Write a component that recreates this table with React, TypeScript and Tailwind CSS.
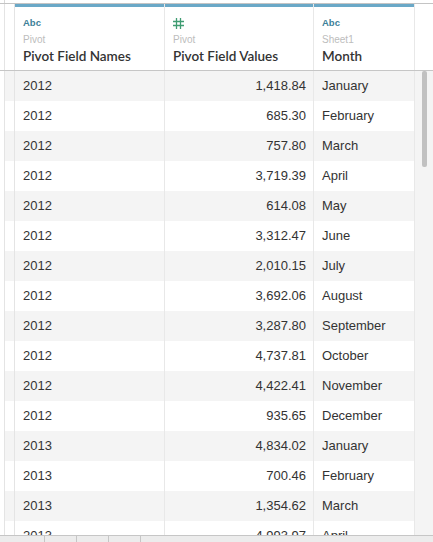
import React from "react";

const rows: [string, string, string][] = [
  ["2012", "1,418.84", "January"],
  ["2012", "685.30", "February"],
  ["2012", "757.80", "March"],
  ["2012", "3,719.39", "April"],
  ["2012", "614.08", "May"],
  ["2012", "3,312.47", "June"],
  ["2012", "2,010.15", "July"],
  ["2012", "3,692.06", "August"],
  ["2012", "3,287.80", "September"],
  ["2012", "4,737.81", "October"],
  ["2012", "4,422.41", "November"],
  ["2012", "935.65", "December"],
  ["2013", "4,834.02", "January"],
  ["2013", "700.46", "February"],
  ["2013", "1,354.62", "March"],
  ["2013", "4,993.97", "April"],
];

function HashIcon() {
  return (
    <svg width="11" height="11" viewBox="0 0 11 11">
      <path
        d="M3.5 0V11M7.5 0V11M0 3.5H11M0 7.5H11"
        stroke="#3f9c72"
        strokeWidth="1.3"
        fill="none"
      />
    </svg>
  );
}

function HeaderCell({
  type,
  source,
  name,
  width,
}: {
  type: "abc" | "num";
  source: string;
  name: string;
  width: string;
}) {
  return (
    <div className={`${width} border-r border-[#e8e8e8] flex flex-col`}>
      <div className="h-[3px] bg-[#6aa8c7]" />
      <div className="px-2 pt-[10px] flex flex-col">
        <div className="h-[12px] flex items-center">
          {type === "abc" ? (
            <span className="text-[9.5px] font-bold text-[#3d7f99] leading-[12px]">Abc</span>
          ) : (
            <HashIcon />
          )}
        </div>
        <div className="mt-[5px] text-[10px] leading-[12px] text-[#bdbdbd]">{source}</div>
        <div
          className="mt-[2px] text-[13.5px] leading-[16px] font-semibold text-[#333333]"
          style={{ fontFamily: "Lato, sans-serif" }}
        >
          {name}
        </div>
      </div>
    </div>
  );
}

export default function App() {
  return (
    <div
      className="w-[433px] h-[542px] bg-white overflow-hidden flex flex-col text-[#333333]"
      style={{ fontFamily: '"Liberation Sans", Arial, sans-serif' }}
    >
      <div className="h-[3px] flex">
        <div className="w-[4px]" />
        <div className="border-l border-[#d8d8d8]" />
      </div>
      <div className="h-px bg-[#c4c4c4]" />

      {/* Header */}
      <div className="flex h-[67px] border-b border-[#c6c6c6]">
        <div className="w-[15px] flex">
          <div className="w-[4px]" />
          <div className="flex-1 border-x border-[#e4e4e4]" />
        </div>
        <HeaderCell type="abc" source="Pivot" name="Pivot Field Names" width="w-[150px]" />
        <HeaderCell type="num" source="Pivot" name="Pivot Field Values" width="w-[149px]" />
        <HeaderCell type="abc" source="Sheet1" name="Month" width="w-[101px]" />
        <div className="flex-1" />
      </div>

      {/* Body */}
      <div className="flex-1 flex overflow-hidden">
        <div className="w-[415px] flex flex-col">
          {rows.map((r, i) => (
            <div
              key={i}
              className={`flex h-[30px] shrink-0 text-[13px] ${i % 2 === 0 ? "bg-[#f4f4f4]" : "bg-white"}`}
            >
              <div className="w-[15px] flex bg-white">
                <div className="w-[4px]" />
                <div
                  className={`flex-1 border-x border-[#e4e4e4] ${i % 2 === 0 ? "bg-[#f4f4f4]" : "bg-white"}`}
                />
              </div>
              <div className="w-[150px] border-r border-[#e8e8e8] px-2 flex items-center">{r[0]}</div>
              <div className="w-[149px] border-r border-[#e8e8e8] pr-[7px] flex items-center justify-end">
                {r[1]}
              </div>
              <div className="w-[101px] border-r border-[#e8e8e8] px-2 flex items-center">{r[2]}</div>
            </div>
          ))}
        </div>
        {/* Scrollbar */}
        <div className="flex-1 bg-[#f4f4f4] pl-[7px]">
          <div className="w-[5px] h-[96px] rounded-[2px] bg-[#c1c1c1]" />
        </div>
      </div>

      {/* Bottom tab strip */}
      <div className="h-[7px] shrink-0 bg-[#ececec] border-t border-[#c6c6c6] flex">
        <div className="w-[45px] border-r border-[#c6c6c6]" />
        <div className="w-[32px] border-r border-[#c6c6c6]" />
        <div className="w-[32px] border-r border-[#c6c6c6]" />
        <div className="w-[32px] border-r border-[#c6c6c6]" />
      </div>
    </div>
  );
}
